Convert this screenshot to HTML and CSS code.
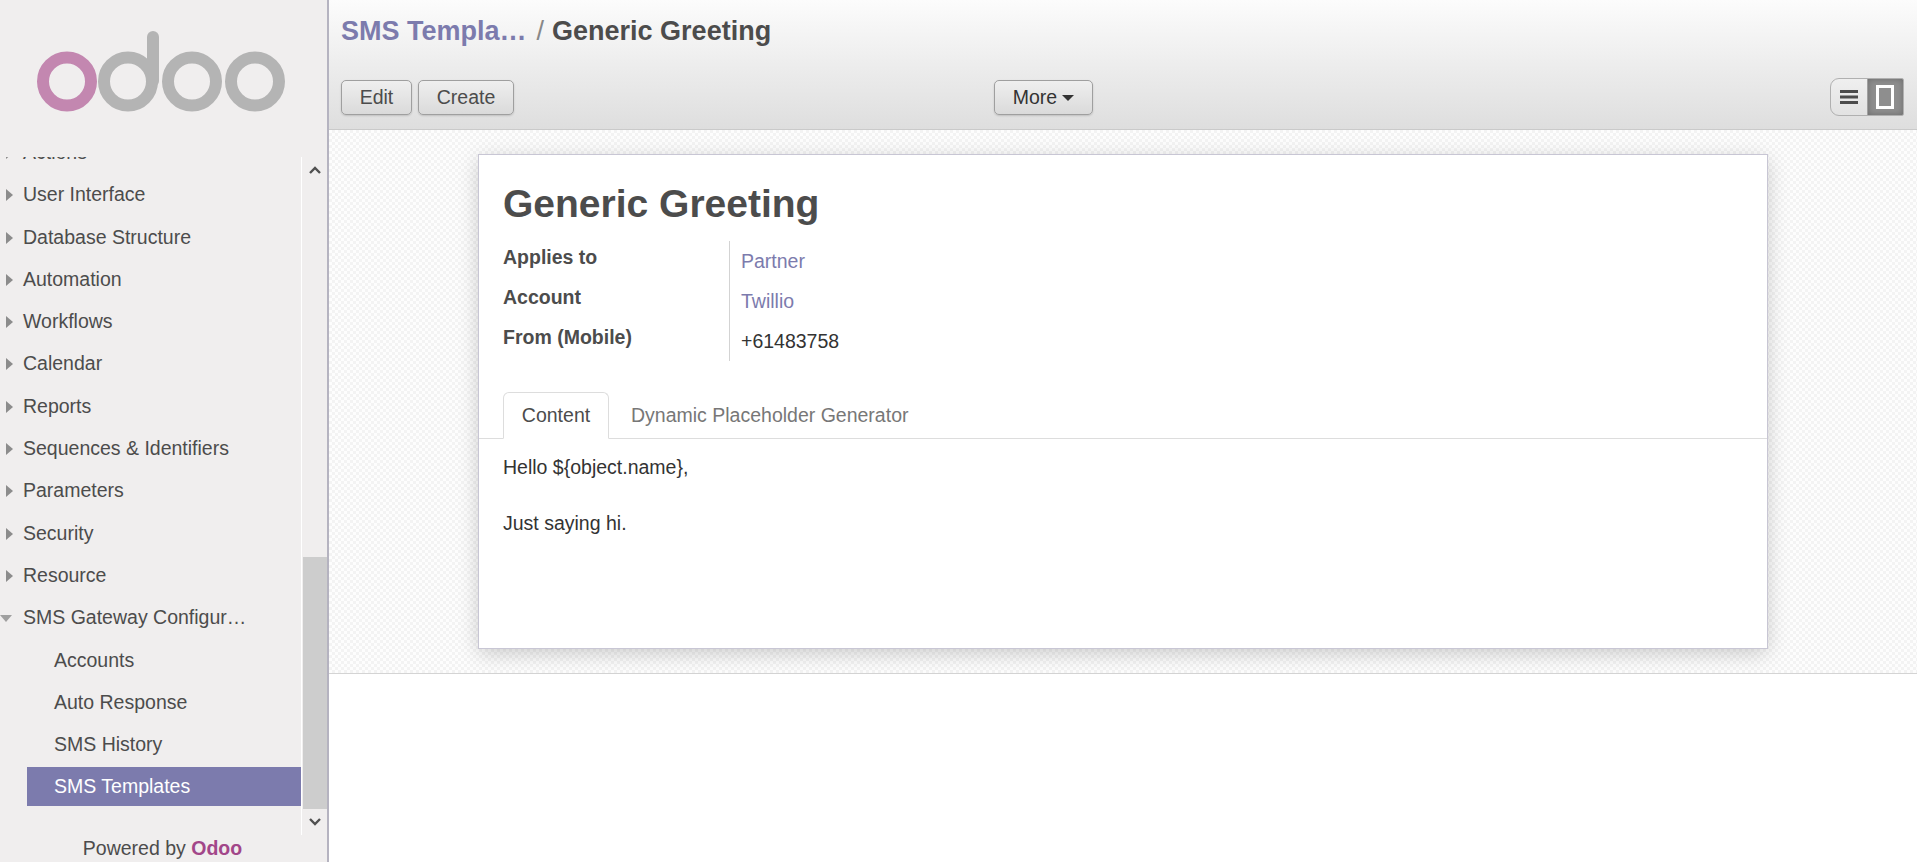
FILE: index.html
```html
<!DOCTYPE html>
<html lang="en">
<head>
  <meta charset="UTF-8">
  <title>Generic Greeting - Odoo</title>
  <link rel="stylesheet" href="styles.css">
</head>
<body>
  <aside class="sidebar">
    <div class="logo">
      <svg width="250" height="82" viewBox="0 0 250 82">
        <circle cx="30" cy="50.5" r="24" fill="none" stroke="#c387b0" stroke-width="12"/>
        <g fill="none" stroke="#b4b4b4" stroke-width="12">
          <circle cx="91" cy="50.5" r="24"/>
          <path d="M116 6 V50" stroke-linecap="round"/>
          <circle cx="155" cy="50.5" r="24"/>
          <circle cx="218" cy="50.5" r="24"/>
        </g>
      </svg>
    </div>
    <div class="menu-wrap">
      <div class="menu">
        <ul class="menu-list">
          <li class="menu-item"><span class="caret"></span>Actions</li>
          <li class="menu-item"><span class="caret"></span>User Interface</li>
          <li class="menu-item"><span class="caret"></span>Database Structure</li>
          <li class="menu-item"><span class="caret"></span>Automation</li>
          <li class="menu-item"><span class="caret"></span>Workflows</li>
          <li class="menu-item"><span class="caret"></span>Calendar</li>
          <li class="menu-item"><span class="caret"></span>Reports</li>
          <li class="menu-item"><span class="caret"></span>Sequences &amp; Identifiers</li>
          <li class="menu-item"><span class="caret"></span>Parameters</li>
          <li class="menu-item"><span class="caret"></span>Security</li>
          <li class="menu-item"><span class="caret"></span>Resource</li>
          <li class="menu-item"><span class="caret caret-open"></span>SMS Gateway Configur…</li>
          <li class="menu-item sub">Accounts</li>
          <li class="menu-item sub">Auto Response</li>
          <li class="menu-item sub">SMS History</li>
          <li class="menu-item sub active">SMS Templates</li>
        </ul>
      </div>
      <div class="scrollbar">
        <div class="scroll-btn">
          <svg width="12" height="8" viewBox="0 0 12 8"><path d="M1 7 L6 2 L11 7" fill="none" stroke="#505050" stroke-width="2.4"/></svg>
        </div>
        <div class="scroll-track"><div class="scroll-thumb"></div></div>
        <div class="scroll-btn">
          <svg width="12" height="8" viewBox="0 0 12 8"><path d="M1 1 L6 6 L11 1" fill="none" stroke="#505050" stroke-width="2.4"/></svg>
        </div>
      </div>
    </div>
    <div class="powered">Powered by <b>Odoo</b></div>
  </aside>

  <main class="main">
    <header class="control-panel">
      <h1 class="breadcrumb"><a class="crumb-link">SMS Templa…</a><span class="crumb-sep">/</span>Generic Greeting</h1>
      <div class="toolbar">
        <div class="toolbar-left">
          <button type="button" class="btn btn-edit">Edit</button>
          <button type="button" class="btn btn-create">Create</button>
        </div>
        <button type="button" class="btn btn-more">More<span class="more-caret"></span></button>
        <div class="view-switch">
          <div class="view-btn">
            <svg width="18" height="14" viewBox="0 0 18 14" fill="#4c4c4c">
              <rect y="0" width="18" height="3"/><rect y="5.5" width="18" height="3"/><rect y="11" width="18" height="3"/>
            </svg>
          </div>
          <div class="view-btn view-on">
            <svg width="18" height="24" viewBox="0 0 18 24"><rect x="1.5" y="1.5" width="15" height="21" fill="none" stroke="#fff" stroke-width="3"/></svg>
          </div>
        </div>
      </div>
    </header>

    <section class="form-area">
      <div class="sheet">
        <h2 class="sheet-title">Generic Greeting</h2>
        <div class="fields">
          <div class="field-labels">
            <div>Applies to</div>
            <div>Account</div>
            <div>From (Mobile)</div>
          </div>
          <div class="field-values">
            <div><a class="link">Partner</a></div>
            <div><a class="link">Twillio</a></div>
            <div>+61483758</div>
          </div>
        </div>
        <div class="tabs">
          <div class="tab tab-active">Content</div>
          <div class="tab">Dynamic Placeholder Generator</div>
        </div>
        <div class="tab-body">
          <p>Hello ${object.name},</p>
          <p>Just saying hi.</p>
        </div>
      </div>
    </section>
  </main>
</body>
</html>
```

FILE: styles.css
```css
* {
  box-sizing: border-box;
}
html, body {
  height: 100%;
}
body {
  margin: 0;
  display: flex;
  overflow: hidden;
  font-family: "Liberation Sans", Arial, sans-serif;
  font-size: 19.5px;
  color: #4c4c4c;
  background: #fff;
}

/* sidebar */
.sidebar {
  width: 329px;
  flex: none;
  display: flex;
  flex-direction: column;
  background: #f0eeee;
  border-right: 2px solid #b5b3c0;
}
.logo {
  height: 157px;
  flex: none;
  padding: 31px 0 0 37px;
}
.logo svg {
  display: block;
  filter: blur(0.5px);
}
.menu-wrap {
  flex: 1;
  min-height: 0;
  display: flex;
}
.menu {
  flex: 1;
  min-width: 0;
  overflow: hidden;
  border-right: 1px solid #fff;
}
.menu-list {
  list-style: none;
  margin: -24px 0 0;
  padding: 0;
}
.menu-item {
  height: 39px;
  margin-bottom: 3.3px;
  line-height: 39px;
  padding-left: 23px;
  white-space: nowrap;
  position: relative;
}
.menu-item.sub {
  margin-left: 27px;
  padding-left: 27px;
}
.menu-item.active {
  background: #7c7bad;
  color: #fff;
}
.caret {
  position: absolute;
  left: 6px;
  top: 14px;
  border-left: 7px solid #8c8c8c;
  border-top: 6px solid transparent;
  border-bottom: 6px solid transparent;
}
.caret-open {
  left: 0;
  top: 17px;
  border-top: 7px solid #a0a0a0;
  border-left: 6px solid transparent;
  border-right: 6px solid transparent;
  border-bottom: 0;
}
.scrollbar {
  width: 25px;
  flex: none;
  display: flex;
  flex-direction: column;
}
.scroll-btn {
  height: 26px;
  flex: none;
  display: flex;
  align-items: center;
  justify-content: center;
}
.scroll-track {
  flex: 1;
  padding-top: 374px;
  display: flex;
}
.scroll-thumb {
  flex: 1;
  background: #cdcdcd;
  margin-left: 1px;
}
.powered {
  height: 27px;
  flex: none;
  padding-right: 2px;
  text-align: center;
  line-height: 26px;
}
.powered b {
  color: #a24689;
}

/* control panel */
.main {
  flex: 1;
  min-width: 0;
  display: flex;
  flex-direction: column;
}
.control-panel {
  height: 130px;
  flex: none;
  padding: 15px 13px 0 12px;
  background: linear-gradient(#fcfcfc, #dedede);
  border-bottom: 1px solid #cacaca;
}
.breadcrumb {
  margin: 0;
  height: 63px;
  font-size: 27px;
  line-height: 32px;
  font-weight: bold;
  white-space: nowrap;
}
.crumb-link {
  color: #7c7bad;
}
.crumb-sep {
  color: #888;
  font-weight: normal;
  margin: 0 8px 0 10px;
}
.toolbar {
  display: flex;
  align-items: center;
}
.toolbar-left {
  width: 653px;
  flex: none;
  display: flex;
  gap: 6px;
}
.btn {
  height: 35px;
  padding: 0;
  font: inherit;
  color: #4c4c4c;
  background: linear-gradient(#efefef, #dadada);
  border: 1px solid #9f9f9f;
  border-radius: 5px;
  box-shadow: 0 1px 2px rgba(0, 0, 0, 0.15);
}
.btn-edit {
  width: 71px;
}
.btn-create {
  width: 96px;
}
.btn-more {
  width: 99px;
  color: #333;
}
.more-caret {
  display: inline-block;
  margin-left: 5px;
  vertical-align: 3px;
  border-top: 6px solid #333;
  border-left: 6px solid transparent;
  border-right: 6px solid transparent;
}
.view-switch {
  display: flex;
  width: 74px;
  height: 38px;
  margin-left: auto;
  border: 1px solid #b0b0b0;
  border-radius: 9px 2px 2px 9px;
  overflow: hidden;
  background: linear-gradient(#efefef, #e2e2e2);
}
.view-btn {
  flex: 1;
  display: flex;
  align-items: center;
  justify-content: center;
}
.view-on {
  background: #8e8e8e;
  box-shadow: inset 0 0 6px rgba(0, 0, 0, 0.25);
  border-left: 1px solid #a0a0a0;
}

/* form */
.form-area {
  height: 544px;
  flex: none;
  padding: 24px 149px 0;
  background-color: #fbfbfb;
  background-image: repeating-conic-gradient(#f3f3f3 0 25%, #fdfdfd 0 50%);
  background-size: 6px 6px;
  border-bottom: 1px solid #d4d4d4;
}
.sheet {
  height: 495px;
  background: #fff;
  border: 1px solid #c8c6d4;
  box-shadow: 0 5px 20px -1px rgba(0, 0, 0, 0.2);
}
.sheet-title {
  margin: 0;
  padding: 26px 24px 0;
  height: 86px;
  font-size: 39px;
  line-height: 46px;
  font-weight: bold;
}
.fields {
  display: flex;
  padding-left: 24px;
}
.field-labels {
  width: 226px;
  flex: none;
  font-weight: bold;
}
.field-labels div {
  height: 40px;
  line-height: 32px;
}
.field-values {
  padding-left: 11px;
  border-left: 1px solid #d3d3d3;
  color: #333;
}
.field-values div {
  height: 40px;
  line-height: 40px;
}
.link {
  color: #7c7bad;
}
.tabs {
  display: flex;
  margin-top: 31px;
  padding-left: 24px;
  height: 47px;
  border-bottom: 1px solid #ddd;
}
.tab {
  height: 47px;
  padding: 0 19px;
  line-height: 44px;
  border: 1px solid transparent;
  color: #777;
  white-space: nowrap;
}
.tab-active {
  width: 106px;
  color: #4c4c4c;
  background: #fff;
  border-color: #ddd #ddd #fff;
  border-radius: 6px 6px 0 0;
  text-align: center;
  padding: 0;
}
.tab-active + .tab {
  padding-left: 21px;
}
.tab-body {
  padding: 18px 24px 0;
  color: #333;
}
.tab-body p {
  margin: 0 0 35px;
  line-height: 21px;
}
```
